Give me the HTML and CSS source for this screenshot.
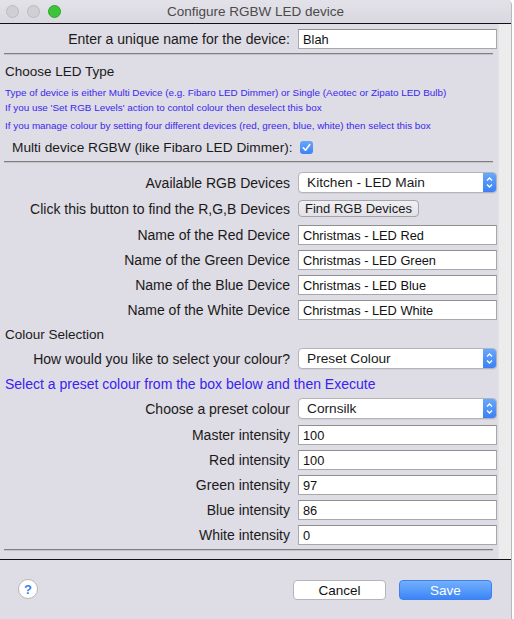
FILE: index.html
```html
<!DOCTYPE html>
<html lang="en">
<head>
  <meta charset="UTF-8">
  <meta name="viewport" content="width=device-width, initial-scale=1">
  <title>Configure RGBW LED device</title>
  <link rel="stylesheet" href="styles.css">
</head>
<body>

  <div class="window">
    <div class="titlebar">
      <div class="lights">
        <span class="light"></span>
        <span class="light"></span>
        <span class="light zoom"></span>
      </div>
      <div class="title">Configure RGBW LED device</div>
    </div>

    <div class="content">
      <div class="panel">

        <div class="row first">
          <label for="devname">Enter a unique name for the device:</label>
          <input type="text" id="devname" value="Blah">
        </div>

        <div class="sep"></div>

        <h3 class="section">Choose LED Type</h3>
        <p class="note n1">Type of device is either Multi Device (e.g. Fibaro LED Dimmer) or Single (Aeotec or Zipato LED Bulb)</p>
        <p class="note">If you use 'Set RGB Levels' action to contol colour then deselect this box</p>
        <p class="note n3">If you manage colour by setting four different devices (red, green, blue, white) then select this box</p>

        <div class="check-row">
          <span>Multi device RGBW (like Fibaro LED Dimmer):</span>
          <span class="checkbox">
            <svg width="13" height="13" viewBox="0 0 13 13"><path d="M3.2 6.8 L5.5 9.2 L9.8 3.6" fill="none" stroke="#fff" stroke-width="1.6" stroke-linecap="round" stroke-linejoin="round"/></svg>
          </span>
        </div>

        <div class="sep s2"></div>

        <div class="row r-select">
          <label>Available RGB Devices</label>
          <div class="select">
            <span>Kitchen - LED Main</span>
            <span class="stepper">
              <svg width="13" height="21" viewBox="0 0 13 21"><path d="M4 8.5 L6.5 6 L9 8.5 M4 12.5 L6.5 15 L9 12.5" fill="none" stroke="#fff" stroke-width="1.3"/></svg>
            </span>
          </div>
        </div>

        <div class="row r-button">
          <label>Click this button to find the R,G,B Devices</label>
          <div><button class="push">Find RGB Devices</button></div>
        </div>

        <div class="row r-field">
          <label>Name of the Red Device</label>
          <input type="text" value="Christmas - LED Red">
        </div>
        <div class="row r-next">
          <label>Name of the Green Device</label>
          <input type="text" value="Christmas - LED Green">
        </div>
        <div class="row r-next">
          <label>Name of the Blue Device</label>
          <input type="text" value="Christmas - LED Blue">
        </div>
        <div class="row r-next">
          <label>Name of the White Device</label>
          <input type="text" value="Christmas - LED White">
        </div>

        <h3 class="section colour">Colour Selection</h3>

        <div class="row r-select2">
          <label>How would you like to select your colour?</label>
          <div class="select">
            <span>Preset Colour</span>
            <span class="stepper">
              <svg width="13" height="21" viewBox="0 0 13 21"><path d="M4 8.5 L6.5 6 L9 8.5 M4 12.5 L6.5 15 L9 12.5" fill="none" stroke="#fff" stroke-width="1.3"/></svg>
            </span>
          </div>
        </div>

        <p class="hint">Select a preset colour from the box below and then Execute</p>

        <div class="row r-select3">
          <label>Choose a preset colour</label>
          <div class="select">
            <span>Cornsilk</span>
            <span class="stepper">
              <svg width="13" height="21" viewBox="0 0 13 21"><path d="M4 8.5 L6.5 6 L9 8.5 M4 12.5 L6.5 15 L9 12.5" fill="none" stroke="#fff" stroke-width="1.3"/></svg>
            </span>
          </div>
        </div>

        <div class="row r-field">
          <label>Master intensity</label>
          <input type="text" value="100">
        </div>
        <div class="row r-next">
          <label>Red intensity</label>
          <input type="text" value="100">
        </div>
        <div class="row r-next">
          <label>Green intensity</label>
          <input type="text" value="97">
        </div>
        <div class="row r-next">
          <label>Blue intensity</label>
          <input type="text" value="86">
        </div>
        <div class="row r-next">
          <label>White intensity</label>
          <input type="text" value="0">
        </div>

        <div class="sep s3"></div>
      </div>
      <div class="gutter"></div>
    </div>

    <div class="footer">
      <span class="help">?</span>
      <div class="actions">
        <button class="cancel">Cancel</button>
        <button class="save">Save</button>
      </div>
    </div>
  </div>

</body>
</html>
```

FILE: styles.css
```css
body {
  margin: 0;
  background-color: #fff;
  font-family: 'Liberation Sans', Arial, sans-serif;
  font-size: 13.5px;
  color: #1a1a1a;
}

.window {
  width: 511px;
  height: 619px;
  background-color: #dedce4;
  border-right: 1px solid #b9b8bd;
  border-top-right-radius: 5px;
  overflow: hidden;
  display: flex;
  flex-direction: column;
}

/* title bar */
.titlebar {
  height: 23px;
  border-bottom: 1px solid #111;
  background: linear-gradient(#e4e2e9, #d9d7df);
  display: flex;
  align-items: center;
  position: relative;
}

.lights {
  display: flex;
  gap: 8px;
  padding-left: 6px;
}

.light {
  width: 11px;
  height: 11px;
  border-radius: 50%;
  background-color: #d0cfd3;
  border: 0.5px solid #bcbbbf;
}

.light.zoom {
  background-color: #3ec43b;
  border-color: #2ea42b;
}

.title {
  position: absolute;
  left: 0;
  right: 0;
  text-align: center;
  color: #4b4b4b;
  font-size: 13.5px;
}

/* scrolling content */
.content {
  display: flex;
  border-bottom: 1px solid #111;
  height: 535px;
}

.panel {
  width: 498px;
  padding-top: 5px;
}

.gutter {
  flex: 1;
  background-color: #ececec;
  border-left: 1px solid #e3e3e3;
}

.row {
  display: grid;
  grid-template-columns: 290px 199px;
  column-gap: 8px;
  align-items: center;
  height: 20px;
}

.row label {
  text-align: right;
  white-space: nowrap;
  font-size: 14px;
}

.row input {
  box-sizing: border-box;
  height: 20px;
  width: 199px;
  margin: 0;
  padding: 1px 4px 0;
  border: 1px solid #a8a8a8;
  border-top-color: #8f8f8f;
  background-color: #fff;
  font-family: inherit;
  font-size: 12.8px;
  color: #111;
}

.sep {
  margin: 4px 5px 0 4px;
  height: 1px;
  background-color: #808080;
  border-bottom: 1px solid #c4c3c8;
}

.s2 {
  margin-top: 6px;
}

.s3 {
  margin-top: 4px;
}

.section {
  margin: 9px 0 0 5px;
  font-size: 13.5px;
  font-weight: normal;
  line-height: 16px;
}

.section.colour {
  margin-top: 7px;
}

.note {
  margin: 0 0 0 5px;
  font-size: 9.9px;
  line-height: 15px;
  color: #3a28ef;
  white-space: nowrap;
}

.note.n1 {
  margin-top: 5px;
}

.note.n3 {
  margin-top: 3px;
}

.check-row {
  margin: 6px 0 0 12px;
  display: flex;
  align-items: center;
  gap: 7px;
  height: 16px;
  font-size: 13.7px;
}

.checkbox {
  width: 13px;
  height: 13px;
  border-radius: 3px;
  background: linear-gradient(#6aa6fa, #3c82f4);
  display: inline-flex;
}

.select {
  box-sizing: border-box;
  height: 21px;
  display: flex;
  align-items: center;
  justify-content: space-between;
  background-color: #fff;
  border: 1px solid #b4b3b8;
  border-radius: 4px;
  overflow: hidden;
  font-size: 13.7px;
  box-shadow: 0 1px 0 rgba(0, 0, 0, 0.05);
}

.select span:first-child {
  padding-left: 8px;
}

.stepper {
  width: 13px;
  height: 21px;
  background: linear-gradient(#6aa9fb, #3a7ef4);
  display: flex;
}

.r-select {
  height: 21px;
  margin-top: 9px;
}

.r-button {
  height: 17px;
  margin-top: 7px;
}

.push {
  height: 17px;
  width: 121px;
  padding: 0;
  border: 1px solid #a6a5aa;
  border-radius: 4px;
  background: linear-gradient(#f0eff3, #e2e1e6);
  font-family: inherit;
  font-size: 13px;
  color: #1a1a1a;
}

.r-field {
  margin-top: 8px;
}

.r-next {
  margin-top: 5px;
}

.r-select2 {
  height: 21px;
  margin-top: 5px;
}

.hint {
  margin: 7px 0 0 5px;
  line-height: 16px;
  font-size: 14px;
  color: #3a22f2;
}

.r-select3 {
  height: 21px;
  margin-top: 6px;
}

.r-select3 + .r-field {
  margin-top: 6px;
}

/* bottom buttons */
.footer {
  display: flex;
  align-items: flex-start;
  justify-content: space-between;
  padding: 20px 19px 0 18px;
}

.help {
  box-sizing: border-box;
  width: 20px;
  height: 20px;
  border-radius: 50%;
  background-color: #fff;
  border: 1px solid #b8b7bc;
  color: #3a7ef4;
  font-size: 13px;
  font-weight: bold;
  display: flex;
  align-items: center;
  justify-content: center;
  margin-top: -1px;
}

.actions {
  display: flex;
  gap: 13px;
}

.actions button {
  width: 93px;
  height: 20px;
  padding: 0;
  border-radius: 4px;
  font-family: inherit;
  font-size: 13.5px;
}

.cancel {
  background-color: #fff;
  border: 1px solid #b5b4b9;
  color: #111;
}

.save {
  background: linear-gradient(#72b0fc, #3d85f7);
  border: 1px solid #3f80ee;
  color: #fff;
}
```
